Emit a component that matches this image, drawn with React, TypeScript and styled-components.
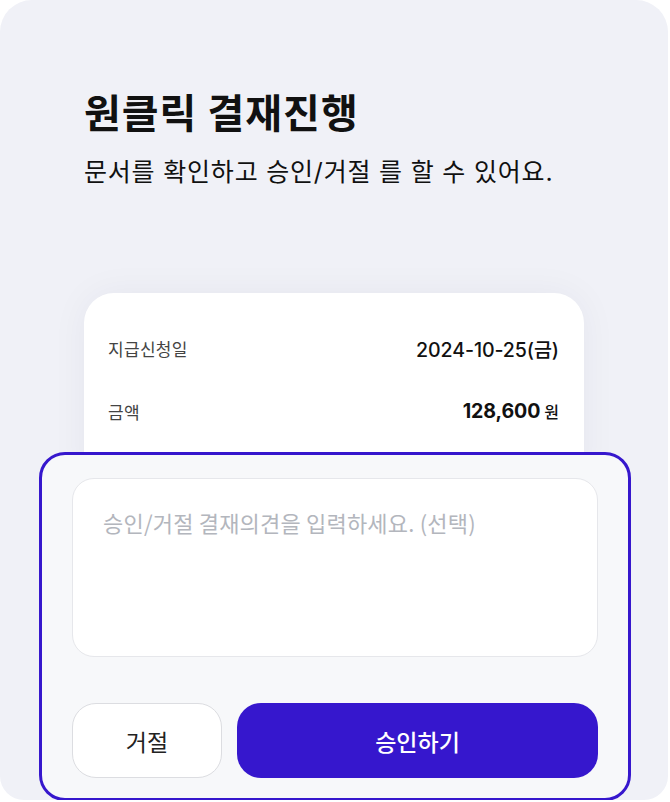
import React from "react";
import styled, { createGlobalStyle } from "styled-components";

const Global = createGlobalStyle`
  html, body { margin: 0; padding: 0; background: #ffffff; }
  body { font-family: "Inter", "Noto Sans CJK KR", sans-serif; }
  * { box-sizing: border-box; }
`;

const Screen = styled.div`
  position: relative;
  width: 668px;
  height: 800px;
  background: #f0f1f7;
  border-radius: 32px 32px 24px 24px;
  display: flex;
  flex-direction: column;
  padding: 0 84px;
`;

const Title = styled.h1`
  margin: 87px 0 0;
  font-family: "Noto Sans CJK KR", sans-serif;
  font-size: 40px;
  line-height: 48px;
  font-weight: 700;
  color: #111111;
  letter-spacing: 1px;
`;

const Subtitle = styled.p`
  margin: 20px 0 0;
  font-family: "Inter", "Noto Sans CJK KR", sans-serif;
  font-size: 25px;
  line-height: 34px;
  font-weight: 400;
  color: #111111;
  letter-spacing: 0.8px;
`;

const InfoCard = styled.div`
  margin-top: 104px;
  background: #ffffff;
  border-radius: 30px;
  box-shadow: 0 0 36px rgba(20, 30, 80, 0.05);
  padding: 37px 25px 60px 24px;
  display: flex;
  flex-direction: column;
  gap: 27px;
`;

const Row = styled.div`
  display: flex;
  align-items: center;
  justify-content: space-between;
  height: 36px;
`;

const Label = styled.span`
  font-family: "Noto Sans CJK KR", sans-serif;
  font-size: 17px;
  color: #444444;
  letter-spacing: 0.3px;
`;

const Value = styled.span<{ $bold?: boolean }>`
  font-family: "Inter", "Noto Sans CJK KR", sans-serif;
  font-size: 19.6px;
  font-weight: ${(p) => (p.$bold ? 700 : 500)};
  color: #111111;
  letter-spacing: -0.1px;
`;

const Unit = styled.span`
  font-family: "Noto Sans CJK KR", sans-serif;
  font-size: 16px;
  font-weight: 500;
  color: #111111;
  margin-left: 4px;
`;

const Sheet = styled.div`
  position: absolute;
  left: 39px;
  top: 452px;
  width: 592px;
  height: 349px;
  background: #f7f8fa;
  border: 3px solid #3617cd;
  border-radius: 26px;
  padding: 23px 30px 20px 30px;
  display: flex;
  flex-direction: column;
  gap: 46px;
`;

const Comment = styled.textarea`
  height: 179px;
  width: 100%;
  resize: none;
  background: #ffffff;
  border: 1px solid #e6e7eb;
  border-radius: 22px;
  padding: 28px 30px;
  font-family: "Noto Sans CJK KR", sans-serif;
  font-size: 22px;
  line-height: 30px;
  color: #111111;
  letter-spacing: 0.2px;
  outline: none;
  &::placeholder { color: #b3b6bd; }
`;

const Buttons = styled.div`
  display: grid;
  grid-template-columns: 150px 1fr;
  gap: 15px;
`;

const Button = styled.button<{ $primary?: boolean }>`
  height: 75px;
  border-radius: 24px;
  font-family: "Noto Sans CJK KR", sans-serif;
  font-size: 23px;
  font-weight: ${(p) => (p.$primary ? 500 : 400)};
  letter-spacing: 0;
  color: ${(p) => (p.$primary ? "#ffffff" : "#222222")};
  background: ${(p) => (p.$primary ? "#3617cd" : "#ffffff")};
  border: ${(p) => (p.$primary ? "none" : "1px solid #dcdde1")};
  cursor: pointer;
`;

export default function App() {
  return (
    <>
      <Global />
      <Screen>
        <Title>원클릭 결재진행</Title>
        <Subtitle>문서를 확인하고 승인/거절 를 할 수 있어요.</Subtitle>
        <InfoCard>
          <Row>
            <Label>지급신청일</Label>
            <Value>2024-10-25(금)</Value>
          </Row>
          <Row>
            <Label>금액</Label>
            <span>
              <Value $bold>128,600</Value>
              <Unit>원</Unit>
            </span>
          </Row>
        </InfoCard>
        <Sheet>
          <Comment placeholder="승인/거절 결재의견을 입력하세요. (선택)" />
          <Buttons>
            <Button>거절</Button>
            <Button $primary>승인하기</Button>
          </Buttons>
        </Sheet>
      </Screen>
    </>
  );
}
